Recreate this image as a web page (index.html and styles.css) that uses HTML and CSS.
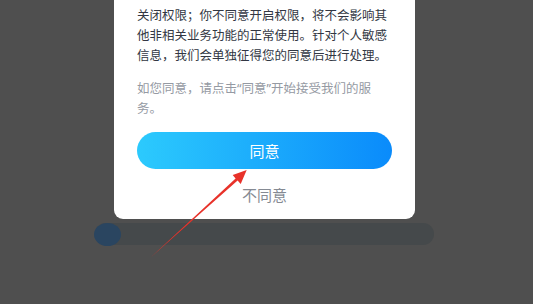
FILE: index.html
```html
<!doctype html>
<html lang="zh">
<head>
	<meta charset="UTF-8">
	<title>权限说明</title>
	<link rel="stylesheet" href="styles.css">
</head>
<body>
<!--弹窗-->
<section class="dialog">
	<p class="dialog_text">关闭权限；你不同意开启权限，将不会影响其他非相关业务功能的正常使用。针对个人敏感信息，我们会单独征得您的同意后进行处理。</p>
	<p class="dialog_tip">如您同意，请点击“同意”开始接受我们的服务。</p>
	<button class="btn_agree">同意</button>
	<div class="btn_refuse">不同意</div>
</section>
<!--底部进度条-->
<div class="bar">
	<div class="bar_dot"></div>
</div>
<!--红色箭头标注-->
<svg class="arrow" width="533" height="304" viewBox="0 0 533 304">
	<polygon points="150,258 235.6,178.6 232.7,175 246.7,170 240.7,184 237.6,180.6" fill="#e8322a"/>
</svg>
</body>
</html>
```

FILE: styles.css
```css
*{margin:0;padding:0}
body{
	background:#4f4f4f;
	font-family:"Noto Sans","Noto Sans CJK SC",sans-serif;
	width:533px;
	height:304px;
	overflow:hidden;
	position:relative;
}
.dialog{
	width:301px;
	margin:-20px 0 0 114px;
	padding:26px 23px 14px;
	box-sizing:border-box;
	background:#fff;
	border-radius:9px;
}
.dialog_text{
	width:255px;
	font-size:12.5px;
	line-height:20px;
	color:#323743;
}
.dialog_tip{
	width:255px;
	margin-top:13px;
	font-size:12.5px;
	line-height:20px;
	color:#959aa3;
}
.btn_agree{
	display:block;
	width:255px;
	height:37px;
	margin-top:13px;
	border:0;
	outline:0;
	border-radius:19px;
	background-image:linear-gradient(to right,#2ccafd 0%,#0a8bfb 100%);
	color:#fff;
	font-family:inherit;
	font-size:15px;
}
.btn_refuse{
	margin-top:16px;
	text-align:center;
	font-size:15px;
	line-height:20px;
	color:#858a93;
}
.bar{
	width:339px;
	height:22px;
	margin:4px 0 0 95px;
	border-radius:11px;
	background:#45494b;
	display:flex;
	align-items:center;
}
.bar_dot{
	width:27px;
	height:23px;
	margin-left:-1px;
	border-radius:50%;
	background:#2a4560;
}
.arrow{
	position:absolute;
	left:0;
	top:0;
}
```
